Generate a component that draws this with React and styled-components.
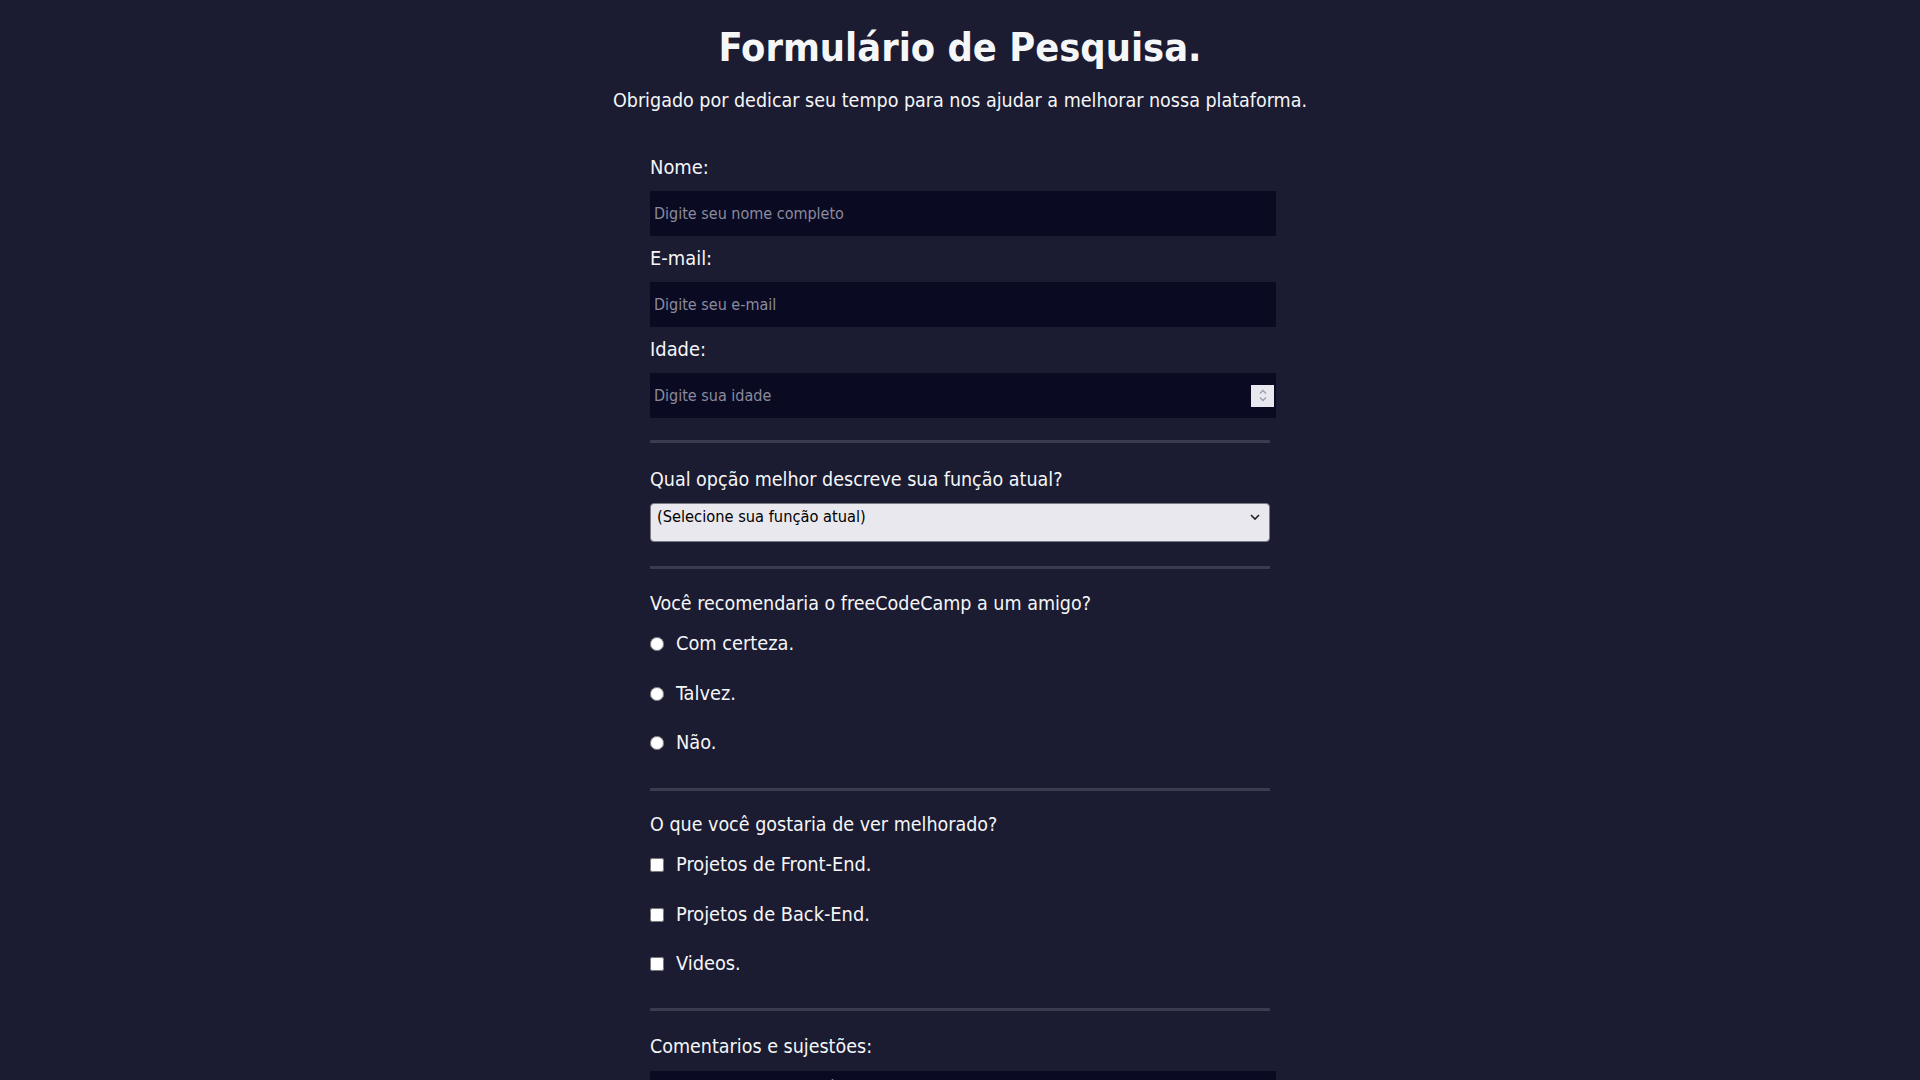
import React from 'react';
import styled, { createGlobalStyle } from 'styled-components';

const GlobalStyle = createGlobalStyle`
  html {
    color-scheme: dark;
    scrollbar-gutter: stable both-edges;
    background: #1b1b32;
  }
  *, *::before, *::after { box-sizing: border-box; }
  body {
    margin: 0;
    background: #1b1b32;
    color: #f5f6f7;
    font-family: "DejaVu Sans Condensed", "DejaVu Sans", sans-serif;
  }
`;

const Page = styled.main`
  display: flex;
  flex-direction: column;
  align-items: center;
  padding: 24px 0 48px;
`;

const Title = styled.h1`
  margin: 0;
  font-size: 39.4px;
  line-height: 46px;
  font-weight: 700;
  text-align: center;
`;

const Subtitle = styled.p`
  margin: 19px 0 0;
  font-size: 19.5px;
  line-height: 24px;
  text-align: center;
`;

const Form = styled.form`
  width: 620px;
  margin-top: 44px;
  display: flex;
  flex-direction: column;
  color-scheme: light;
`;

const Field = styled.div`
  display: flex;
  flex-direction: column;
  gap: 12px;
  & + & { margin-top: 12px; }
`;

const FieldLabel = styled.label`
  font-size: 19.9px;
  line-height: 22px;
  color: #f5f6f7;
`;

const InputWrap = styled.div`
  position: relative;
  width: 626px;
`;

const TextInput = styled.input`
  display: block;
  width: 626px;
  height: 45px;
  margin: 0;
  padding: 0 4px;
  border: none;
  outline: none;
  background: #0a0a23;
  color: #f5f6f7;
  font-family: inherit;
  font-size: 16px;
  &::placeholder { color: #8b8b9c; opacity: 1; }
  &::-webkit-inner-spin-button,
  &::-webkit-outer-spin-button { -webkit-appearance: none; margin: 0; }
  -moz-appearance: textfield;
`;

const Spinner = styled.span`
  position: absolute;
  right: 2px;
  top: 50%;
  transform: translateY(-50%);
  width: 23px;
  height: 22px;
  background: #e9e8ee;
  display: flex;
  align-items: center;
  justify-content: center;
  pointer-events: none;
`;

const SpinnerArrows = styled.span`
  display: flex;
  flex-direction: column;
  gap: 3px;
`;

const Divider = styled.hr`
  width: 620px;
  height: 3px;
  margin: ${(p) => p.$top}px 0 0;
  border: none;
  background: #3b3b4f;
`;

const Section = styled.section`
  display: flex;
  flex-direction: column;
  padding-top: ${(p) => p.$top ?? 23}px;
`;

const Question = styled.p`
  margin: 0;
  font-size: 19.5px;
  line-height: 22px;
`;

const SelectWrap = styled.div`
  position: relative;
  margin-top: 12px;
  width: 620px;
`;

const Select = styled.select`
  display: block;
  width: 620px;
  margin: 0;
  padding: 3px 24px 14px 6px;
  appearance: none;
  -webkit-appearance: none;
  background: #e9e8ee;
  border: 1px solid #7a7a86;
  border-radius: 4px;
  color: #000;
  font-family: inherit;
  font-size: 16.3px;
  line-height: 20px;
  outline: none;
`;

const SelectArrow = styled.svg`
  position: absolute;
  right: 10px;
  top: 11px;
  pointer-events: none;
`;

const Options = styled.div`
  display: flex;
  flex-direction: column;
  gap: 27.5px;
  margin-top: 18px;
`;

const Option = styled.label`
  display: flex;
  align-items: center;
  gap: 12px;
  font-size: 19.8px;
  line-height: 22px;
`;

const Choice = styled.input`
  margin: 0;
  width: 14px;
  height: 14px;
  flex: none;
`;

const TextArea = styled.textarea`
  display: block;
  width: 626px;
  height: 110px;
  margin: 13px 0 0;
  padding: 6px 4px;
  border: none;
  outline: none;
  resize: vertical;
  background: #0a0a23;
  color: #f5f6f7;
  font-family: inherit;
  font-size: 16px;
  &::placeholder { color: #8b8b9c; opacity: 1; }
`;

const Submit = styled.button`
  display: block;
  width: 626px;
  height: 42px;
  margin-top: 24px;
  border: 3px solid #3b3b4f;
  background: #3b3b4f;
  color: #f5f6f7;
  font-family: inherit;
  font-size: 18px;
`;

const Chevron = ({ up }) => (
  <svg width="8" height="5" viewBox="0 0 8 5">
    <polyline
      points={up ? '1,4.5 4,1.5 7,4.5' : '1,0.5 4,3.5 7,0.5'}
      fill="none"
      stroke="#9c9cae"
      strokeWidth="1.3"
    />
  </svg>
);

export default function App() {
  return (
    <>
      <GlobalStyle />
      <Page>
        <Title>Formulário de Pesquisa.</Title>
        <Subtitle>Obrigado por dedicar seu tempo para nos ajudar a melhorar nossa plataforma.</Subtitle>
        <Form onSubmit={(e) => e.preventDefault()}>
          <Field>
            <FieldLabel htmlFor="name">Nome:</FieldLabel>
            <TextInput id="name" type="text" placeholder="Digite seu nome completo" />
          </Field>
          <Field>
            <FieldLabel htmlFor="email">E-mail:</FieldLabel>
            <TextInput id="email" type="email" placeholder="Digite seu e-mail" />
          </Field>
          <Field>
            <FieldLabel htmlFor="age">Idade:</FieldLabel>
            <InputWrap>
              <TextInput id="age" type="number" placeholder="Digite sua idade" />
              <Spinner>
                <SpinnerArrows>
                  <Chevron up />
                  <Chevron />
                </SpinnerArrows>
              </Spinner>
            </InputWrap>
          </Field>

          <Divider $top={22} />
          <Section $top={26}>
            <Question>Qual opção melhor descreve sua função atual?</Question>
            <SelectWrap>
              <Select defaultValue="">
                <option value="" disabled>(Selecione sua função atual)</option>
                <option value="student">Estudante</option>
                <option value="job">Trabalho em tempo integral</option>
                <option value="learner">Aprendiz em tempo integral</option>
                <option value="preferNo">Prefiro não dizer</option>
                <option value="other">Outro</option>
              </Select>
              <SelectArrow width="10" height="7" viewBox="0 0 10 7">
                <polyline points="1,1 5,5 9,1" fill="none" stroke="#222" strokeWidth="1.6" />
              </SelectArrow>
            </SelectWrap>
          </Section>

          <Divider $top={24} />
          <Section $top={24}>
            <Question>Você recomendaria o freeCodeCamp a um amigo?</Question>
            <Options>
              <Option><Choice type="radio" name="recommend" value="sim" />Com certeza.</Option>
              <Option><Choice type="radio" name="recommend" value="talvez" />Talvez.</Option>
              <Option><Choice type="radio" name="recommend" value="nao" />Não.</Option>
            </Options>
          </Section>

          <Divider $top={34} />
          <Section $top={23}>
            <Question>O que você gostaria de ver melhorado?</Question>
            <Options>
              <Option><Choice type="checkbox" value="front" />Projetos de Front-End.</Option>
              <Option><Choice type="checkbox" value="back" />Projetos de Back-End.</Option>
              <Option><Choice type="checkbox" value="videos" />Videos.</Option>
            </Options>
          </Section>

          <Divider $top={33} />
          <Section $top={25}>
            <Question as="label" htmlFor="comments">Comentarios e sujestões:</Question>
            <TextArea id="comments" placeholder="Deixe aqui seus comentários e sugestões..." />
            <Submit type="submit">Enviar</Submit>
          </Section>
        </Form>
      </Page>
    </>
  );
}
